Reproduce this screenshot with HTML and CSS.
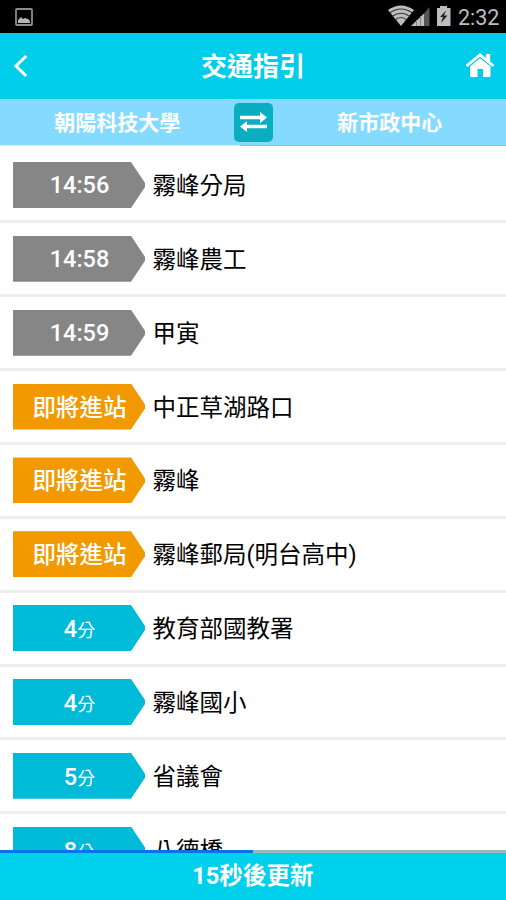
FILE: index.html
```html
<!DOCTYPE html>
<html lang="zh-Hant">
<head>
<meta charset="utf-8">
<title>交通指引</title>
<link rel="stylesheet" href="styles.css">
</head>
<body>
<div class="screen">
  <div class="status">
    <svg class="picture" width="18" height="18" viewBox="0 0 18 18"><rect x="1" y="1" width="16" height="16" rx="1" fill="none" stroke="#8d8d8d" stroke-width="1.8"/><path d="M3 15v-3l3-3 2 2 2-1 3 1 2 2v2z" fill="#b5b5b5"/></svg>
    <div class="indicators">
      <svg width="66" height="24" viewBox="0 0 66 24">
        <path d="M0 6Q13-3 26 6L13 22z" fill="#bebebe"/>
        <path d="M1.500 9Q13 1 24.500 9M4 12.500Q13 6 22 12.500M7 16Q13 11 19 16" fill="none" stroke="#333" stroke-width="1.1"/>
        <path d="M23 22L36 9.500V22z" fill="#bebebe"/>
        <path d="M36 9.500L41.500 3V22H36z" fill="#555"/>
        <path d="M28.500 16v6M32.500 12v10" stroke="#888" stroke-width="1"/>
        <path d="M49 4h3V2h7v2h3.500v18H49z" fill="#bebebe"/>
        <path d="M58 6.500l-6 6.500h3l-2 6 6.500-7.500h-3.500z" fill="#222"/>
      </svg>
      <span class="clock">2:32</span>
    </div>
  </div>
  <header class="header">
    <svg class="back" width="16" height="24" viewBox="0 0 16 24"><path d="M13.200 2L3 12l10.200 10" fill="none" stroke="#fff" stroke-width="3"/></svg>
    <h1 class="title">交通指引</h1>
    <svg class="home" width="30" height="26" viewBox="0 0 30 26"><path d="M1.500 14L15 2.800 28.500 14" fill="none" stroke="#fff" stroke-width="2.800"/><path d="M21 2h4.200v9.500L21 8z" fill="#fff"/><path d="M5 14.600L15 6.300l10.500 8.300V23.500q0 1.500-1.500 1.500h-6v-8h-5.500v8h-6Q5 25 5 23.500z" fill="#fff"/></svg>
  </header>
  <nav class="route">
    <span class="stop-name">朝陽科技大學</span>
    <span class="swap"><svg width="27" height="20" viewBox="0 0 27 20"><path d="M0 3.800h20V0l7 5.600-7 5.600V7.200H0zM27 12.800H7V9l-7 5.600 7 5.400v-3.800h20z" fill="#fff"/></svg></span>
    <span class="stop-name">新市政中心</span>
  </nav>
  <div class="route-edge"></div>
  <main class="list">
    <div class="row"><span class="tag past">14:56</span><span class="name">霧峰分局</span></div>
    <div class="row"><span class="tag past">14:58</span><span class="name">霧峰農工</span></div>
    <div class="row"><span class="tag past">14:59</span><span class="name">甲寅</span></div>
    <div class="row"><span class="tag soon">即將進站</span><span class="name">中正草湖路口</span></div>
    <div class="row"><span class="tag soon">即將進站</span><span class="name">霧峰</span></div>
    <div class="row"><span class="tag soon">即將進站</span><span class="name">霧峰郵局(明台高中)</span></div>
    <div class="row"><span class="tag wait">4<small>分</small></span><span class="name">教育部國教署</span></div>
    <div class="row"><span class="tag wait">4<small>分</small></span><span class="name">霧峰國小</span></div>
    <div class="row"><span class="tag wait">5<small>分</small></span><span class="name">省議會</span></div>
    <div class="row"><span class="tag wait">8<small>分</small></span><span class="name">八德橋</span></div>
  </main>
  <div class="progress"><div class="progress-fill"></div></div>
  <footer class="footer">15秒後更新</footer>
</div>
</body>
</html>
```

FILE: styles.css
```css
* { box-sizing: border-box; }

body {
  margin: 0;
  font-family: Roboto, "Noto Sans CJK TC", sans-serif;
}

.screen {
  display: flex;
  flex-direction: column;
  width: 506px;
  height: 900px;
  overflow: hidden;
  background: #fff;
}

.status {
  display: flex;
  flex: 0 0 33px;
  justify-content: space-between;
  padding: 0 7px 0 15px;
  background: #000;
}

.picture { margin-top: 8px; }

.indicators {
  display: flex;
  gap: 4px;
  padding-top: 4px;
}

.clock {
  width: 41px;
  color: #bebebe;
  font-size: 21.5px;
  line-height: 28px;
  white-space: nowrap;
}

.header {
  display: grid;
  flex: 0 0 66px;
  grid-template-columns: 60px 1fr 60px;
  align-items: center;
  background: #00cde9;
}

.back { margin-left: 13px; }
.home { margin: 0 0 2px 19px; }

.title {
  margin: 0;
  padding-top: 2px;
  color: #fff;
  font-size: 26px;
  font-weight: 700;
  line-height: 40px;
  text-align: center;
}

.route {
  display: grid;
  flex: 0 0 46px;
  grid-template-columns: 1fr 39px 1fr;
  align-items: center;
  background: #85dbff;
}

.route-edge {
  flex: 0 0 1px;
  background: linear-gradient(90deg, #d9eef7 240px, #a3b9c4 240px);
}

.stop-name {
  padding: 2px 0 0 1px;
  color: #fff;
  font-size: 21px;
  font-weight: 700;
  line-height: 30px;
  text-align: center;
}

.swap {
  display: flex;
  align-items: center;
  justify-content: center;
  height: 39px;
  border-radius: 5px;
  background: #0badc1;
}

.list {
  flex: 1;
  min-height: 0;
  padding-top: 3.6px;
  overflow: hidden;
}

.row {
  display: flex;
  align-items: center;
  height: 73.85px;
  padding-left: 13px;
  border-bottom: 3px solid #eee;
}

.tag {
  width: 133px;
  height: 46px;
  color: #fff;
  font-size: 23.5px;
  font-weight: 500;
  line-height: 48px;
  text-align: center;
  clip-path: polygon(0 0, 118px 0, 132px 21px, 132px 25px, 118px 100%, 0 100%);
}

.tag small {
  font-size: 18px;
  font-weight: 400;
}

.past {
  background: #868686;
  line-height: 47px;
}

.soon { background: #f29900; }
.wait { background: #00bbd7; }

.name {
  margin-left: 6.5px;
  color: #000;
  font-size: 23.5px;
  line-height: 46px;
  padding-top: 2px;
  white-space: nowrap;
}

.progress {
  flex: 0 0 3px;
  background: #94b9b6;
}

.progress-fill {
  width: 50%;
  height: 3px;
  background: #0672ed;
}

.footer {
  flex: 0 0 47px;
  background: #00d0ec;
  color: #fff;
  font-size: 23.6px;
  font-weight: 700;
  line-height: 46px;
  text-align: center;
}
```
